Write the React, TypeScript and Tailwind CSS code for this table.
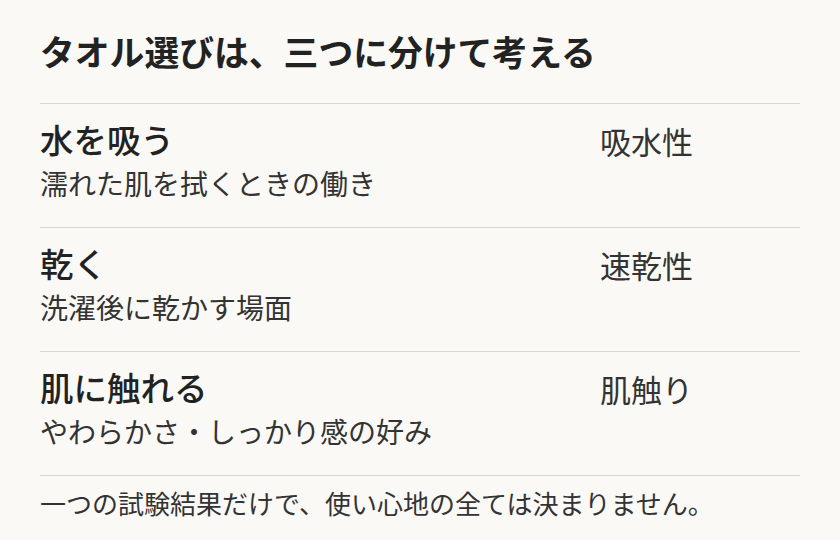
import React from "react";

const rows = [
  { title: "水を吸う", sub: "濡れた肌を拭くときの働き", label: "吸水性" },
  { title: "乾く", sub: "洗濯後に乾かす場面", label: "速乾性" },
  { title: "肌に触れる", sub: "やわらかさ・しっかり感の好み", label: "肌触り" },
];

export default function App() {
  return (
    <div
      className="w-[840px] h-[540px] bg-[#faf9f6] text-[#222222] px-[40px] overflow-hidden"
      style={{ fontFamily: '"Noto Sans CJK JP", "Noto Sans", sans-serif' }}
    >
      <div className="h-[104px] border-b border-[#d9d7d3] flex items-center">
        <h1 className="text-[34.8px] font-bold leading-none -mt-[1px]">
          タオル選びは、三つに分けて考える
        </h1>
      </div>
      {rows.map((r) => (
        <div
          key={r.title}
          className="h-[124px] border-b border-[#d9d7d3] grid grid-cols-[560px_1fr] pt-[17px]"
        >
          <div className="flex flex-col gap-[8px]">
            <div className="text-[33.5px] font-medium leading-[36px]">{r.title}</div>
            <div className="text-[28px] leading-[36px] text-[#333333]">{r.sub}</div>
          </div>
          <div className="text-[31px] leading-[36px] text-[#333333] pt-[2px]">{r.label}</div>
        </div>
      ))}
      <div className="pt-[9px] text-[26px] leading-[36px] text-[#333333]">
        一つの試験結果だけで、使い心地の全ては決まりません。
      </div>
    </div>
  );
}
